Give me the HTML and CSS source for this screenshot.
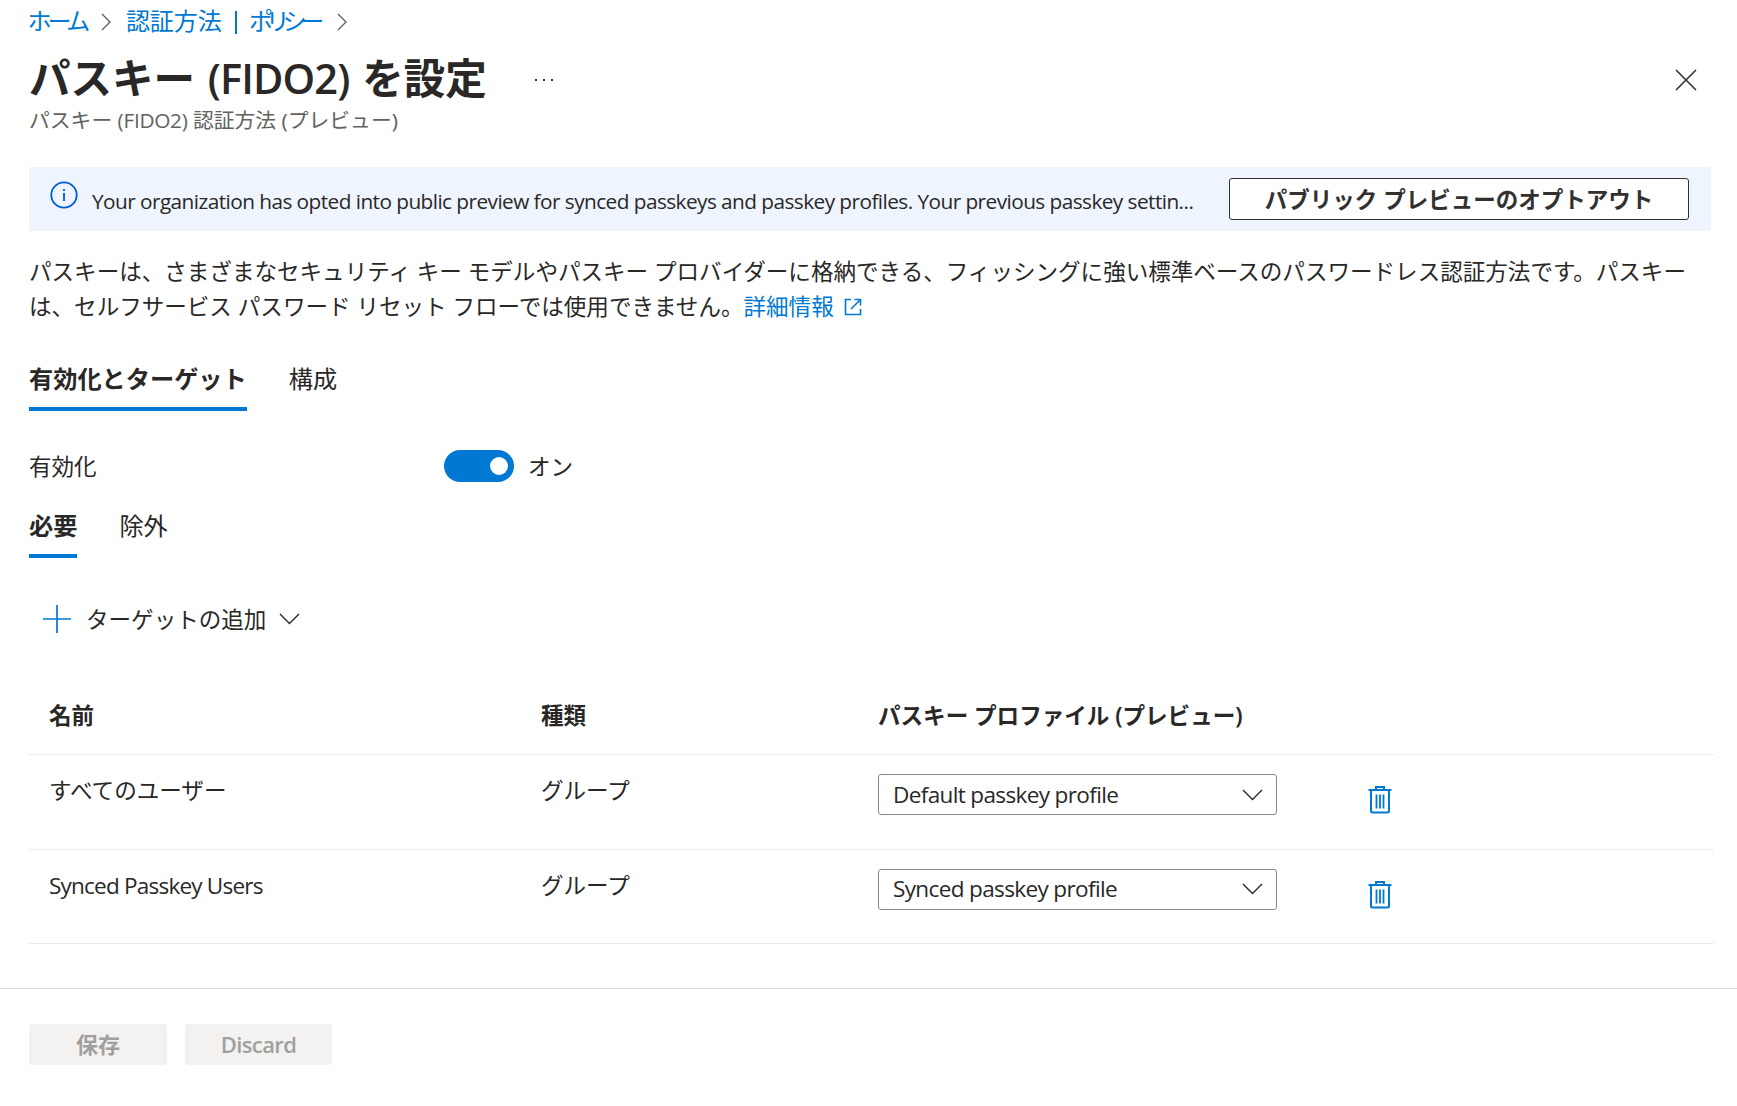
FILE: index.html
```html
<!DOCTYPE html>
<html lang="ja">
<head>
  <meta charset="UTF-8" />
  <meta name="viewport" content="width=device-width, initial-scale=1.0"/>
  <title>パスキー (FIDO2) を設定</title>
  <link rel="stylesheet" href="styles.css">
</head>
<body>
  <nav class="breadcrumb">
    <a class="kana" href="#">ホーム</a>
    <svg class="crumb-arrow" viewBox="0 0 10 18"><path d="M1 1l8 8-8 8"/></svg>
    <a href="#">認証方法</a>
    <span class="crumb-bar"></span>
    <a class="kana narrow" href="#">ポリシー</a>
    <svg class="crumb-arrow" viewBox="0 0 10 18"><path d="M1 1l8 8-8 8"/></svg>
  </nav>

  <header class="header">
    <h1>パスキー <span class="latin">(FIDO2)</span> を設定</h1>
    <button class="more"><i></i><i></i><i></i></button>
    <button class="close"><svg viewBox="0 0 22 22"><path d="M1 1l20 20M21 1L1 21"/></svg></button>
  </header>
  <p class="subtitle">パスキー <span class="latin">(FIDO2)</span> 認証方法 (プレビュー)</p>

  <div class="banner">
    <svg class="info" viewBox="0 0 28 28"><circle cx="14" cy="14" r="12.7"/><path d="M14 12v8M14 8v2"/></svg>
    <span class="banner-text">Your organization has opted into public preview for synced passkeys and passkey profiles. Your previous passkey settin...</span>
    <button class="opt-out">パブリック プレビューのオプトアウト</button>
  </div>

  <p class="description">パスキーは、さまざまなセキュリティ キー モデルやパスキー プロバイダーに格納できる、フィッシングに強い標準ベースのパスワードレス認証方法です。パスキー<br>は、セルフサービス パスワード リセット フローでは使用できません。<a href="#">詳細情報<svg class="external" viewBox="0 0 18 18"><path d="M7 1.5H1.5v15h15V11M10.5 1.5h6v6M16.5 1.5L7 11"/></svg></a></p>

  <div class="tabs main-tabs">
    <div class="tab active">有効化とターゲット</div>
    <div class="tab">構成</div>
  </div>

  <div class="enable-row">
    <span class="enable-label">有効化</span>
    <span class="toggle"><span class="knob"></span></span>
    <span class="toggle-text">オン</span>
  </div>

  <div class="tabs sub-tabs">
    <div class="tab active">必要</div>
    <div class="tab">除外</div>
  </div>

  <div class="toolbar">
    <svg class="plus" viewBox="0 0 28 28"><path d="M14 0v28M0 14h28"/></svg>
    <span class="toolbar-text">ターゲットの追加</span>
    <svg class="chevron" viewBox="0 0 21 12"><path d="M1 1l9.5 9.5L20 1"/></svg>
  </div>

  <div class="table">
    <div class="row head">
      <span>名前</span>
      <span>種類</span>
      <span>パスキー プロファイル (プレビュー)</span>
    </div>
    <div class="row">
      <span class="cell">すべてのユーザー</span>
      <span class="cell">グループ</span>
      <div class="select"><span>Default passkey profile</span><svg class="chevron" viewBox="0 0 21 12"><path d="M1 1l9.5 9.5L20 1"/></svg></div>
      <svg class="trash" viewBox="0 0 24 29"><path d="M0.5 5h23M8 4.5V2h8v2.5M3 5v21q0 1.5 1.5 1.5h15q1.5 0 1.5-1.5V5"/><path class="bars" d="M8.5 9.5v14M12 9.5v14M15.5 9.5v14"/></svg>
    </div>
    <div class="row">
      <span class="cell user">Synced Passkey Users</span>
      <span class="cell">グループ</span>
      <div class="select"><span>Synced passkey profile</span><svg class="chevron" viewBox="0 0 21 12"><path d="M1 1l9.5 9.5L20 1"/></svg></div>
      <svg class="trash" viewBox="0 0 24 29"><path d="M0.5 5h23M8 4.5V2h8v2.5M3 5v21q0 1.5 1.5 1.5h15q1.5 0 1.5-1.5V5"/><path class="bars" d="M8.5 9.5v14M12 9.5v14M15.5 9.5v14"/></svg>
    </div>
  </div>

  <footer class="footer">
    <button class="save" disabled>保存</button>
    <button class="discard" disabled>Discard</button>
  </footer>
</body>
</html>
```

FILE: styles.css
```css
:root {
  --text-color: #292827;
  --link-color: #0078d4;
  --line-color: #edebe9;
}

* {
  box-sizing: border-box;
}

body {
  margin: 0;
  height: 1106px;
  overflow: hidden;
  background: #fff;
  color: var(--text-color);
  font-family: "Noto Sans", "Noto Sans CJK JP", sans-serif;
  font-size: 22.55px;
  line-height: 34px;
}

a {
  color: var(--link-color);
  text-decoration: none;
}

button {
  font-family: inherit;
  padding: 0;
  border: none;
  background: none;
}

svg {
  display: block;
  flex: none;
  fill: none;
  stroke: currentColor;
}

h1, p {
  margin: 0;
}

.latin, .banner-text, .select, .user, .footer .discard {
  font-family: "Open Sans", "Noto Sans CJK JP", sans-serif;
}

.breadcrumb {
  display: flex;
  align-items: center;
  height: 42px;
  padding-left: 28px;
  font-size: 24px;
}

.breadcrumb .kana {
  font-feature-settings: "palt";
  letter-spacing: -3.6px;
  margin-right: 1px;
}

.breadcrumb .narrow {
  letter-spacing: -4.5px;
  margin-right: 3px;
}

.crumb-arrow {
  width: 10px;
  height: 18px;
  margin: 2px 15px 0 14px;
  stroke: #605e5c;
  stroke-width: 1.3;
}

.crumb-bar {
  width: 2px;
  height: 23px;
  margin: 2px 12px 0 13px;
  background: var(--link-color);
}

.header {
  display: flex;
  align-items: center;
  height: 66px;
  padding: 8px 40px 0 29px;
}

h1 {
  margin-top: -2px;
  font-size: 41.5px;
  font-weight: 600;
  line-height: 58px;
}

h1 .latin {
  margin: 0 2px;
  letter-spacing: -0.9px;
}

.more {
  display: flex;
  gap: 6px;
  margin: 2px 0 0 48px;
}

.more i {
  width: 2px;
  height: 2px;
  background: #323130;
}

.close {
  margin: 2px 0 0 auto;
}

.close svg {
  width: 22px;
  height: 22px;
  stroke: #323130;
  stroke-width: 1.6;
}

.subtitle {
  height: 59px;
  padding-left: 29px;
  color: #646260;
  font-size: 20.8px;
  line-height: 24px;
}

.subtitle .latin {
  letter-spacing: -0.3px;
}

.banner {
  display: flex;
  align-items: center;
  width: 1682px;
  height: 64px;
  margin-left: 29px;
  padding: 0 22px 0 21px;
  background: #eff5fe;
}

.info {
  width: 28px;
  height: 28px;
  margin: -8px 14px 0 0;
  stroke: #015cda;
  stroke-width: 1.8;
}

.banner-text {
  padding-top: 4px;
  font-size: 20.8px;
  letter-spacing: -0.56px;
  white-space: nowrap;
}

.opt-out {
  flex: none;
  width: 460px;
  height: 42px;
  margin-left: auto;
  padding-bottom: 2px;
  border: 1px solid #323130;
  border-radius: 3px;
  background: #fff;
  color: #323130;
  font-size: 22.5px;
  font-weight: 700;
}

.description {
  height: 119px;
  padding: 23px 0 0 29px;
  line-height: 35px;
  white-space: nowrap;
}

.external {
  display: inline-block;
  width: 18px;
  height: 18px;
  margin-left: 10px;
  stroke-width: 1.6;
  vertical-align: -1px;
}

.tabs {
  display: flex;
  gap: 42px;
  padding-left: 29px;
  font-size: 24.2px;
}

.tab {
  height: 54px;
  line-height: 43px;
}

.active {
  font-weight: 600;
  border-bottom: 4px solid var(--link-color);
}

.main-tabs {
  padding-top: 7px;
}

.enable-row {
  display: flex;
  align-items: center;
  height: 110px;
  padding-left: 29px;
}

.enable-label {
  width: 415px;
  padding-top: 2px;
}

.toggle {
  display: flex;
  align-items: center;
  justify-content: flex-end;
  width: 70px;
  height: 32px;
  margin-right: 14px;
  padding-right: 6px;
  border-radius: 16px;
  background: var(--link-color);
}

.toggle-text {
  padding-top: 2px;
}

.knob {
  width: 18px;
  height: 18px;
  border-radius: 50%;
  background: #fff;
}

.sub-tabs {
  margin-top: -17px;
}

.toolbar {
  display: flex;
  align-items: center;
  height: 122px;
  padding-left: 43px;
}

.toolbar-text {
  padding-top: 2px;
}

.plus {
  width: 28px;
  height: 28px;
  margin-right: 15px;
  stroke: var(--link-color);
  stroke-width: 1.7;
}

.chevron {
  width: 21px;
  height: 12px;
  stroke-width: 1.4;
}

.toolbar .chevron {
  margin-left: 13px;
}

.table {
  width: 1685px;
  margin-left: 29px;
}

.row {
  display: grid;
  grid-template-columns: 492px 337px 490px 24px;
  height: 94.5px;
  padding-left: 20px;
  border-bottom: 1px solid var(--line-color);
}

.head {
  height: 75px;
  padding-top: 19px;
  font-weight: 600;
}

.cell {
  padding-top: 19px;
}

.user {
  letter-spacing: -0.8px;
}

.select {
  display: flex;
  align-items: center;
  justify-content: space-between;
  width: 399px;
  height: 41px;
  margin-top: 19px;
  padding: 0 13px 0 14px;
  border: 1px solid #8a8886;
  border-radius: 3px;
  letter-spacing: -0.65px;
}

.trash {
  width: 24px;
  height: 29px;
  margin-top: 30px;
  stroke: var(--link-color);
  stroke-width: 2;
}

.bars {
  stroke-width: 1.8;
}

.footer {
  display: flex;
  gap: 18px;
  margin-top: 44px;
  padding: 35px 29px;
  border-top: 1px solid #dcdcdc;
}

.footer button {
  height: 41px;
  padding-bottom: 2px;
  border-radius: 3px;
  background: #f3f2f1;
  color: #a19f9d;
  font-size: 22px;
  font-weight: 600;
}

.footer .save {
  width: 138px;
  padding-bottom: 4px;
}

.footer .discard {
  width: 147px;
  letter-spacing: -0.6px;
}
```
